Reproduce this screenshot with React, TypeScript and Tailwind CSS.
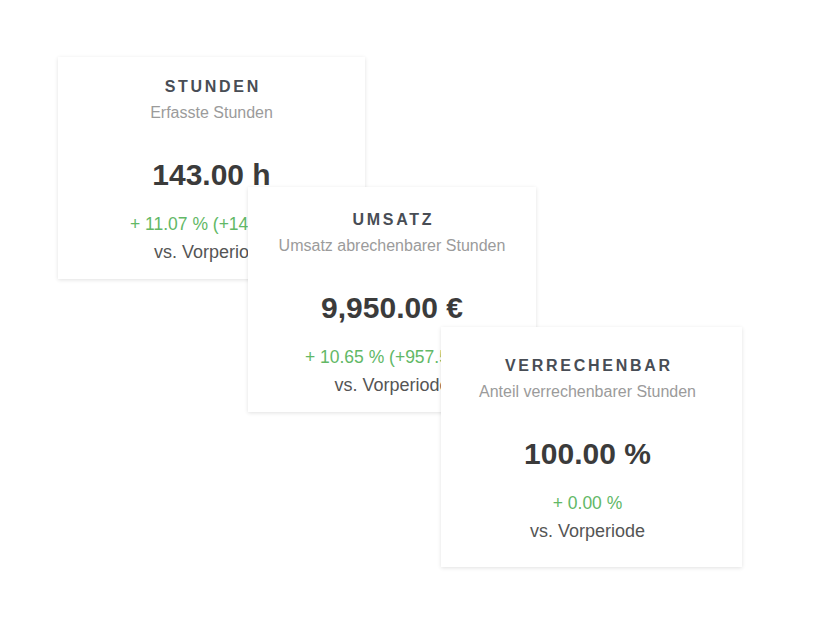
const font = { fontFamily: '"Liberation Sans", Arial, sans-serif' };

interface StatCardProps {
  title: string;
  subtitle: string;
  value: string;
  change: string;
  className: string;
}

function StatCard({ title, subtitle, value, change, className }: StatCardProps) {
  return (
    <div
      className={`absolute flex flex-col items-center bg-white text-center shadow-[0_1px_4px_rgba(0,0,0,0.12)] ${className}`}
    >
      <div className="text-[16px] font-bold leading-5 tracking-[0.17em] text-[#484d55] pl-[0.17em]">
        {title}
      </div>
      <div className="mt-[6px] text-[16px] leading-5 text-[#9b9b9b]">{subtitle}</div>
      <div className="mt-[34px] text-[30px] font-bold leading-9 text-[#3b3b3b]">{value}</div>
      <div className="mt-[19px] text-[17.5px] leading-6 text-[#62b866]">{change}</div>
      <div className="mt-[4px] text-[18px] leading-6 text-[#555]">vs. Vorperiode</div>
    </div>
  );
}

export default function App() {
  return (
    <div className="relative h-[643px] w-[820px] overflow-hidden bg-white" style={font}>
      <StatCard
        title="STUNDEN"
        subtitle="Erfasste Stunden"
        value="143.00 h"
        change="+ 11.07 % (+14.25 h)"
        className="left-[58px] top-[57px] h-[222px] w-[307px] pt-[20px]"
      />
      <StatCard
        title="UMSATZ"
        subtitle="Umsatz abrechenbarer Stunden"
        value="9,950.00 €"
        change="+ 10.65 % (+957.50 €)"
        className="left-[248px] top-[187px] h-[225px] w-[288px] pt-[23px]"
      />
      <StatCard
        title="VERRECHENBAR"
        subtitle="Anteil verrechenbarer Stunden"
        value="100.00 %"
        change="+ 0.00 %"
        className="left-[441px] top-[327px] h-[240px] w-[301px] pt-[29px] pr-[8px]"
      />
    </div>
  );
}
